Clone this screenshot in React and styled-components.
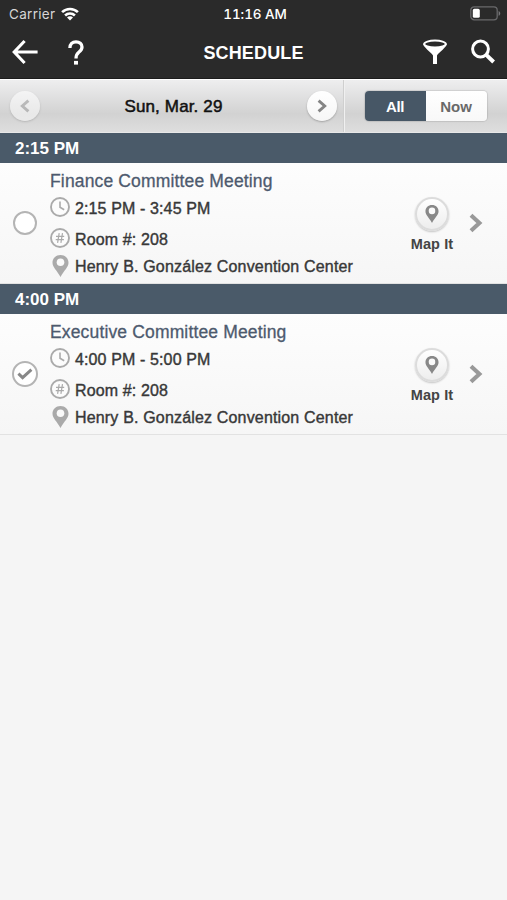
import styled, { createGlobalStyle } from 'styled-components';
import React, { useState } from 'react';


const sessions = [
    { id: 1, start: "2:15 PM", end: "3:45 PM", title: "Finance Committee Meeting", room: "208", place: "Henry B. González Convention Center", checked: false },
    { id: 2, start: "4:00 PM", end: "5:00 PM", title: "Executive Committee Meeting", room: "208", place: "Henry B. González Convention Center", checked: true },
];


const WifiIcon = () => (
    <svg width="18" height="14" viewBox="0 0 18 14" fill="none" stroke="#fff" strokeWidth="2.6">
        <path d="M1.1 5.2 A11.2 11.2 0 0 1 16.9 5.2" />
        <path d="M4.1 8.5 A7 7 0 0 1 13.9 8.5" />
        <path d="M9 13.6 L6 10.6 A4.2 4.2 0 0 1 12 10.6 Z" fill="#fff" stroke="none" />
    </svg>
);

const BatteryIcon = () => (
    <svg width="31" height="15" viewBox="0 0 31 15">
        <rect x="0.8" y="0.8" width="26.4" height="13" rx="3.4" fill="none" stroke="#69696b" strokeWidth="1.3" />
        <rect x="2.8" y="2.8" width="7" height="9" rx="1.6" fill="#fff" />
        <path d="M28.6 4.9 C30.8 5.6 30.8 9 28.6 9.7 Z" fill="#77777a" />
    </svg>
);

const BackIcon = () => (
    <svg width="28" height="26" viewBox="0 0 28 26" fill="none" stroke="#fff" strokeWidth="3.1" strokeLinejoin="miter">
        <path d="M13.6 2 L3.2 13 L13.6 24 M3.4 13 H26.6" />
    </svg>
);

const HelpIcon = () => (
    <svg width="16" height="25" viewBox="0 0 16 25" fill="none" stroke="#fff" strokeWidth="3.3">
        <path d="M1.9 8 C1.9 3.9 4.4 1.8 8 1.8 C11.6 1.8 14 3.9 14 7 C14 9.6 12.6 10.9 10.8 12.3 C8.9 13.8 8 14.8 8 18.6" />
        <path d="M8 20.9 V24.6" strokeWidth="4" />
    </svg>
);

const FilterIcon = () => (
    <svg width="26" height="26" viewBox="0 0 26 26">
        <path d="M1.2 4.8 C1.2 8 9 13.4 11 16.4 V25 H15 V16.4 C17 13.4 24.8 8 24.8 4.8 Z" fill="#fff" />
        <ellipse cx="13" cy="5" rx="10.8" ry="3.4" fill="#2a2a2a" stroke="#fff" strokeWidth="2" />
    </svg>
);

const SearchIcon = () => (
    <svg width="26" height="26" viewBox="0 0 26 26" fill="none" stroke="#fff">
        <circle cx="10.5" cy="10" r="7.9" strokeWidth="3" />
        <path d="M16 15.6 L23.6 23" strokeWidth="4" />
    </svg>
);

const ArrowIcon = ({ flip, color }) => (
    <svg width="10" height="14" viewBox="0 0 10 14" fill="none" stroke={color} strokeWidth="2.9">
        <path d={flip ? "M8.4 1.6 L2.3 7 L8.4 12.4" : "M1.6 1.6 L7.7 7 L1.6 12.4"} />
    </svg>
);

const ChevronIcon = () => (
    <svg width="14" height="20" viewBox="0 0 14 20" fill="none" stroke="#999" strokeWidth="4.1">
        <path d="M2 2.2 L10.4 10 L2 17.8" />
    </svg>
);

const ClockIcon = () => (
    <svg width="20" height="20" viewBox="0 0 20 20" fill="none" stroke="#aaa">
        <circle cx="10" cy="10" r="9" fill="#fcfcfc" strokeWidth="1.9" />
        <path d="M10 4.4 V10.2 L14.2 12.7" strokeWidth="1.6" />
    </svg>
);

const HashIcon = () => (
    <svg width="20" height="20" viewBox="0 0 20 20" fill="none" stroke="#aaa">
        <circle cx="10" cy="10" r="9" fill="#fcfcfc" strokeWidth="1.9" />
        <path d="M9.2 5.2 L7.6 14.8 M12.5 5.2 L10.9 14.8 M6 8.4 H14.2 M5.7 11.7 H13.9" strokeWidth="1.2" />
    </svg>
);

const PinIcon = ({ width, height, color, hole }) => (
    <svg width={width} height={height} viewBox="0 0 16 22">
        <path d="M8 0 C3.4 0 0 3.3 0 7.7 C0 12.4 4.6 15.4 8 22 C11.4 15.4 16 12.4 16 7.7 C16 3.3 12.6 0 8 0 Z" fill={color} />
        <circle cx="8" cy="7.2" r={hole} fill="#fafafa" />
    </svg>
);

const CheckIcon = () => (
    <svg width="16" height="12" viewBox="0 0 16 12" fill="none" stroke="#888" strokeWidth="3">
        <path d="M1.4 5.6 L5.6 9.6 L14.4 1.6" />
    </svg>
);


const App = () => {
    const [view, setView] = useState("All");
    const [checked, setChecked] = useState(sessions.filter(s => s.checked).map(s => s.id));

    function handleCheck (id) {
        setChecked(checked.includes(id) ? checked.filter(c => c !== id) : [...checked, id]);
    };

return (
    <Screen>
        <GlobalStyle />
        <StatusBar>
            <Carrier>Carrier <WifiIcon /></Carrier>
            <Clock>11:16 AM</Clock>
            <BatteryIcon />
        </StatusBar>
        <NavBar>
            <NavGroup $gap="29px">
                <IconButton aria-label="Back"><BackIcon /></IconButton>
                <IconButton aria-label="Help"><HelpIcon /></IconButton>
            </NavGroup>
            <NavTitle>SCHEDULE</NavTitle>
            <NavGroup $gap="22px" $end>
                <IconButton aria-label="Filter"><FilterIcon /></IconButton>
                <IconButton aria-label="Search"><SearchIcon /></IconButton>
            </NavGroup>
        </NavBar>
        <Toolbar>
            <DayPicker>
                <RoundButton $faded aria-label="Previous day"><ArrowIcon flip color="#a4a4a4" /></RoundButton>
                <Day>Sun, Mar. 29</Day>
                <RoundButton aria-label="Next day"><ArrowIcon color="#858585" /></RoundButton>
            </DayPicker>
            <ViewPicker>
                <Segments>
                    {["All", "Now"].map(name => (
                        <Segment key={name} $active={view === name} onClick={() => setView(name)}>{name}</Segment>
                    ))}
                </Segments>
            </ViewPicker>
        </Toolbar>
        {sessions.map(session => (
            <section key={session.id}>
                <TimeHeader>{session.start}</TimeHeader>
                <Row>
                    <CheckCell>
                        <CheckCircle $checked={checked.includes(session.id)} onClick={() => handleCheck(session.id)} aria-label="Add to my schedule">
                            {checked.includes(session.id) && <CheckIcon />}
                        </CheckCircle>
                    </CheckCell>
                    <Info>
                        <Title>{session.title}</Title>
                        <Detail $height="30px"><ClockIcon /><DetailText $top="4px">{session.start} - {session.end}</DetailText></Detail>
                        <Detail $height="32px"><HashIcon /><DetailText $top="3px">Room #: {session.room}</DetailText></Detail>
                        <Detail $height="23px"><PinBox><PinIcon width="17" height="22" color="#aaa" hole="3.8" /></PinBox><DetailText $spacing="0.17px">{session.place}</DetailText></Detail>
                    </Info>
                    <MapButton>
                        <MapCircle><PinIcon width="14" height="18" color="#888" hole="4" /></MapCircle>
                        <span>Map It</span>
                    </MapButton>
                    <ChevronIcon />
                </Row>
            </section>
        ))}
    </Screen>
);

};

export default App;


const GlobalStyle = createGlobalStyle`
body {
    margin: 0;
    background: #f5f5f5;
    font-family: "Liberation Sans", Arial, sans-serif;
}
* {
    box-sizing: border-box;
}
button {
    padding: 0;
    border: 0;
    background: none;
    font-family: inherit;
    cursor: pointer;
}
svg {
    display: block;
    flex: none;
}
`

const Screen = styled.main`
min-height: 900px;
background: #f5f5f5;
`

const StatusBar = styled.div`
display: grid;
grid-template-columns: 1fr auto 1fr;
align-items: center;
height: 27px;
padding: 0 6px 0 9px;
background: #2a2a2a;
color: #fff;
> svg {
    justify-self: end;
}
`

const Carrier = styled.div`
display: flex;
align-items: center;
gap: 6px;
font-family: Inter, sans-serif;
font-size: 13.5px;
letter-spacing: 0.3px;
color: #d6d6d6;
`

const Clock = styled.div`
font-family: Inter, sans-serif;
font-size: 13.5px;
font-weight: 500;
font-feature-settings: "tnum";
letter-spacing: -0.1px;
`

const NavBar = styled.header`
display: grid;
grid-template-columns: 1fr auto 1fr;
align-items: center;
height: 52px;
padding: 0 11px 1px 11px;
background: #2a2a2a;
border-bottom: 1px solid #1c1c1c;
`

const NavGroup = styled.div`
display: flex;
align-items: center;
justify-content: ${props => props.$end ? "flex-end" : "flex-start"};
gap: ${props => props.$gap};
`

const IconButton = styled.button`
display: flex;
`

const NavTitle = styled.h1`
margin: 0;
padding-top: 2px;
color: #fff;
font-size: 18px;
font-weight: bold;
letter-spacing: 0.15px;
`

const Toolbar = styled.div`
display: flex;
height: 54px;
background: linear-gradient(#eeeeef, #d2d2d2 65%, #dedede);
border-top: 1px solid #fff;
border-bottom: 1px solid #e8e8e8;
`

const DayPicker = styled.div`
display: flex;
align-items: center;
justify-content: space-between;
width: 344px;
padding: 0 6px 0 10px;
border-right: 1px solid #cfcfcf;
`

const RoundButton = styled.button`
display: flex;
align-items: center;
justify-content: center;
width: 30px;
height: 30px;
border-radius: 50%;
background: linear-gradient(#fff, #f6f6f6);
box-shadow: 0 1px 2px rgba(0, 0, 0, 0.25);
opacity: ${props => props.$faded ? 0.6 : 1};
`

const Day = styled.div`
padding-top: 2px;
color: #111;
font-size: 17px;
letter-spacing: 0.15px;
-webkit-text-stroke: 0.5px #111;
`

const ViewPicker = styled.div`
display: flex;
flex: 1;
align-items: center;
justify-content: center;
padding-right: 1px;
border-left: 1px solid #f0f0f0;
`

const Segments = styled.div`
display: flex;
width: 122px;
height: 30px;
border-radius: 4px;
overflow: hidden;
box-shadow: 0 0 1px 1px rgba(0, 0, 0, 0.1);
`

const Segment = styled.button`
flex: 1;
background: ${props => props.$active ? "#475766" : "linear-gradient(#fff, #f8f8f8)"};
color: ${props => props.$active ? "#fff" : "#696969"};
font-size: 15px;
font-weight: bold;
letter-spacing: ${props => props.$active ? "-0.4px" : "0"};
`

const TimeHeader = styled.h2`
display: flex;
align-items: center;
height: 30px;
margin: 0;
padding: 1px 15px 0;
background: #4a5a69;
color: #fff;
font-size: 17px;
font-weight: bold;
`

const Row = styled.article`
display: flex;
align-items: center;
height: 121px;
padding-right: 24px;
background: linear-gradient(#fdfdfd, #f6f6f6);
border-bottom: 1px solid #e2e2e2;
`

const CheckCell = styled.div`
display: flex;
justify-content: center;
width: 50px;
`

const CheckCircle = styled.button`
display: flex;
align-items: center;
justify-content: center;
width: ${props => props.$checked ? "26px" : "24px"};
height: ${props => props.$checked ? "26px" : "24px"};
border: 2px solid #b4b4b4;
border-radius: 50%;
background: #fff;
`

const Info = styled.div`
flex: 1;
align-self: stretch;
padding-top: 6px;
color: #383838;
white-space: nowrap;
`

const Title = styled.h3`
height: 23px;
margin: 0;
color: #4d5a6e;
font-size: 17.5px;
font-weight: normal;
letter-spacing: 0.15px;
line-height: 25px;
-webkit-text-stroke: 0.3px #4d5a6e;
`

const Detail = styled.div`
display: flex;
align-items: center;
gap: 5px;
height: ${props => props.$height};
`

const DetailText = styled.span`
padding-top: ${props => props.$top || "2px"};
font-size: 16px;
letter-spacing: ${props => props.$spacing || "0.12px"};
-webkit-text-stroke: 0.4px #383838;
`

const PinBox = styled.span`
display: flex;
justify-content: center;
width: 20px;
`

const MapButton = styled.button`
display: flex;
flex-direction: column;
align-items: center;
gap: 5px;
width: 50px;
margin: 2px 12px 0 0;
color: #444;
font-size: 14.5px;
font-weight: bold;
letter-spacing: 0.1px;
white-space: nowrap;
`

const MapCircle = styled.span`
display: flex;
align-items: center;
justify-content: center;
width: 34px;
height: 34px;
border: 2px solid #dcdcdc;
border-radius: 50%;
background: linear-gradient(#fff, #ededed);
box-shadow: 0 1px 2px rgba(0, 0, 0, 0.22);
`
